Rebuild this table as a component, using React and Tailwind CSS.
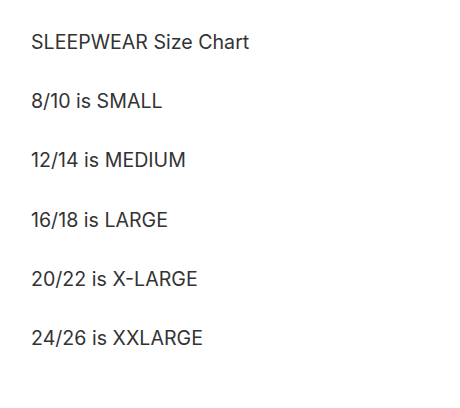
import React from "react";

const lines = [
  "SLEEPWEAR Size Chart",
  "8/10 is SMALL",
  "12/14 is MEDIUM",
  "16/18 is LARGE",
  "20/22 is X-LARGE",
  "24/26 is XXLARGE",
];

export default function App() {
  return (
    <div className="w-[460px] h-[408px] bg-white overflow-hidden">
      <div
        className="flex flex-col gap-[35.2px] pt-[30px] pl-[31px] text-[19.6px] leading-[24px] text-[#333333]"
        style={{ fontFamily: "Inter, 'Liberation Sans', sans-serif" }}
      >
        {lines.map((t) => (
          <p key={t}>{t}</p>
        ))}
      </div>
    </div>
  );
}
